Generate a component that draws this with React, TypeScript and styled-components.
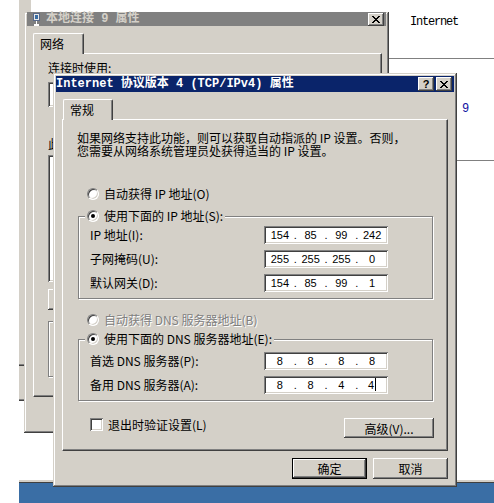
import React from 'react';
import styled, { createGlobalStyle, css } from 'styled-components';

const FACE = '#d4d0c8';
const SHADOW = '#808080';
const DARK = '#404040';
const NAVY = '#0a246a';

const UI_FONT = '"Noto Sans CJK SC", "Liberation Sans", sans-serif';
const MONO_FONT = '"Liberation Mono", "Noto Sans CJK SC", monospace';

const GlobalStyle = createGlobalStyle`
  html, body {
    margin: 0;
    padding: 0;
    background: #fff;
  }
  body {
    font-family: ${UI_FONT};
    font-size: 12px;
    color: #000;
  }
`;

const raised = css`
  box-shadow: inset -1px -1px ${DARK}, inset 1px 1px #fff, inset -2px -2px ${SHADOW},
    inset 2px 2px ${FACE};
`;

const sunken = css`
  box-shadow: inset 1px 1px ${SHADOW}, inset -1px -1px #fff, inset 2px 2px ${DARK},
    inset -2px -2px ${FACE};
`;

const Screen = styled.div`
  position: relative;
  width: 494px;
  height: 503px;
  overflow: hidden;
  background: #fff;
`;

/* desktop strip under the explorer window */
const DesktopBand = styled.div`
  position: absolute;
  left: 19px;
  right: 0;
  top: 480px;
  bottom: 0;
  border-top: 2px solid ${FACE};
  box-shadow: inset 0 1px ${DARK};
  background: #3a6ea5;
`;

const FarWindow = styled.div`
  position: absolute;
  left: 19px;
  top: 0;
  width: 12px;
  height: 401px;
  box-sizing: border-box;
  background: ${FACE};
  border-bottom: 1px solid ${DARK};
  box-shadow: inset 0 -1px ${SHADOW};
`;

const FarPane = styled.div`
  height: 366px;
  box-sizing: border-box;
  border-bottom: 1px solid ${DARK};
  box-shadow: inset 0 -1px ${SHADOW};
`;

const ListPane = styled.div`
  position: absolute;
  left: 389px;
  top: 0;
  width: 105px;
  display: flex;
  flex-direction: column;
`;

const ListCell = styled.div<{ $height: number; $padTop: number; $padLeft: number; $blue?: boolean }>`
  height: ${({ $height }) => $height}px;
  box-sizing: border-box;
  padding: ${({ $padTop, $padLeft }) => `${$padTop}px 0 0 ${$padLeft}px`};
  border-bottom: 1px solid ${SHADOW};
  font-family: ${MONO_FONT};
  font-size: 12px;
  line-height: 14px;
  letter-spacing: -1.2px;
  color: ${({ $blue }) => ($blue ? '#1010a0' : '#000')};
`;

const Window = styled.section<{
  $left: number;
  $top: number;
  $width: number;
  $height: number;
  $cutTop?: boolean;
}>`
  position: absolute;
  left: ${({ $left }) => $left}px;
  top: ${({ $top }) => $top}px;
  width: ${({ $width }) => $width}px;
  height: ${({ $height }) => $height}px;
  box-sizing: border-box;
  padding: ${({ $cutTop }) => ($cutTop ? '0 3px 3px' : '3px')};
  background: ${FACE};
  box-shadow: inset -1px -1px ${DARK}, inset 1px 1px ${FACE}, inset -2px -2px ${SHADOW},
    inset 2px 2px #fff;
  display: flex;
  flex-direction: column;
`;

const TitleBar = styled.header<{ $active?: boolean; $height: number; $padLeft: number }>`
  flex: none;
  height: ${({ $height }) => $height}px;
  display: flex;
  align-items: center;
  padding: 0 2px 0 ${({ $padLeft }) => $padLeft}px;
  background: ${({ $active }) => ($active ? NAVY : SHADOW)};
  color: ${({ $active }) => ($active ? '#fff' : FACE)};
  font-family: ${MONO_FONT};
  font-size: 12px;
  font-weight: bold;
`;

const TitleText = styled.span`
  flex: 1;
  min-width: 0;
  white-space: pre;
  overflow: hidden;
  line-height: 16px;
`;

const TitleIcon = styled.svg`
  flex: none;
  margin-right: 5px;
`;

const CaptionButton = styled.span<{ $height: number }>`
  flex: none;
  width: 16px;
  height: ${({ $height }) => $height}px;
  box-sizing: border-box;
  display: flex;
  align-items: center;
  justify-content: center;
  background: ${FACE};
  ${raised};
  color: #000;
  font-family: 'Liberation Sans', sans-serif;
  font-size: 11px;
  font-weight: bold;
  line-height: 1;

  & + & {
    margin-left: 2px;
  }
`;

const WindowBody = styled.div<{ $padRight: number }>`
  flex: 1;
  display: flex;
  flex-direction: column;
  padding: 7px ${({ $padRight }) => $padRight}px 0 6px;
`;

const TabStrip = styled.div<{ $offset: number }>`
  flex: none;
  height: 20px;
  display: flex;
  align-items: flex-start;
  padding-left: ${({ $offset }) => $offset}px;
`;

const Tab = styled.div<{ $width: number }>`
  position: relative;
  z-index: 1;
  width: ${({ $width }) => $width}px;
  height: 21px;
  box-sizing: border-box;
  padding-left: 6px;
  border-top: 1px solid #fff;
  border-left: 1px solid #fff;
  border-right: 1px solid ${DARK};
  border-radius: 2px 2px 0 0;
  box-shadow: inset -1px 0 ${SHADOW};
  background: ${FACE};
  line-height: 19px;
`;

const TabPanel = styled.div<{ $height: number }>`
  flex: none;
  height: ${({ $height }) => $height}px;
  box-sizing: border-box;
  border: 1px solid;
  border-color: #fff ${DARK} ${DARK} #fff;
  box-shadow: inset -1px -1px ${SHADOW};
  display: flex;
  flex-direction: column;
  overflow: hidden;
`;

const Intro = styled.p`
  margin: 11px 0 0 14px;
  line-height: 13px;
`;

const OptionRow = styled.div<{ $top: number; $left?: number }>`
  height: 16px;
  margin: ${({ $top, $left = 24 }) => `${$top}px 0 0 ${$left}px`};
  display: flex;
  align-items: center;
  gap: 5px;
  white-space: nowrap;
`;

const OptionText = styled.span<{ $disabled?: boolean }>`
  line-height: 16px;
  color: ${({ $disabled }) => ($disabled ? SHADOW : '#000')};
  text-shadow: ${({ $disabled }) => ($disabled ? '1px 1px 0 #fff' : 'none')};
`;

const Radio = styled.span<{ $checked?: boolean }>`
  position: relative;
  flex: none;
  width: 12px;
  height: 12px;
  box-sizing: border-box;
  border-radius: 50%;
  border: 1px solid;
  border-color: ${SHADOW} #fff #fff ${SHADOW};
  box-shadow: inset 1px 1px ${DARK}, inset -1px -1px ${FACE};
  background: #fff;

  &::after {
    content: '';
    display: ${({ $checked }) => ($checked ? 'block' : 'none')};
    position: absolute;
    left: 3px;
    top: 3px;
    width: 4px;
    height: 4px;
    border-radius: 50%;
    background: #000;
  }
`;

const CheckBox = styled.span`
  flex: none;
  width: 13px;
  height: 13px;
  box-sizing: border-box;
  background: #fff;
  ${sunken};
`;

const GroupBox = styled.fieldset<{ $top: number }>`
  margin: ${({ $top }) => $top}px 14px 0 15px;
  padding: 0;
  min-inline-size: 0;
  border: 1px solid ${SHADOW};
  box-shadow: inset 1px 1px #fff, 1px 1px 0 #fff;
`;

const GroupLegend = styled.legend`
  margin-left: 6px;
  padding: 0 2px;
  height: 16px;
  display: flex;
  align-items: center;
  gap: 5px;
  background: ${FACE};
  white-space: nowrap;
`;

const FieldGrid = styled.div<{ $top: number; $bottom: number }>`
  display: grid;
  grid-template-columns: 174px 124px;
  row-gap: 6px;
  align-items: center;
  padding: ${({ $top, $bottom }) => `${$top}px 0 ${$bottom}px 11px`};
`;

const FieldLabel = styled.span`
  line-height: 18px;
  white-space: nowrap;
`;

const IpBox = styled.div`
  height: 18px;
  box-sizing: border-box;
  padding: 0 2px;
  display: grid;
  grid-template-columns: 1fr 3px 1fr 3px 1fr 3px 1fr;
  align-items: center;
  background: #fff;
  ${sunken};
  font-family: 'Liberation Sans', sans-serif;
  font-size: 11px;
  line-height: 16px;
`;

const Octet = styled.span`
  text-align: center;
`;

const Dot = styled.span`
  text-align: center;
`;

const Caret = styled.span`
  display: inline-block;
  width: 1px;
  height: 13px;
  margin-left: 1px;
  vertical-align: -2px;
  background: #000;
`;

const FooterRow = styled.div`
  margin-top: 17px;
  padding: 0 13px 0 27px;
  display: flex;
  align-items: flex-start;
  justify-content: space-between;
`;

const CheckLabel = styled.label`
  display: flex;
  align-items: center;
  gap: 5px;
  height: 13px;
  line-height: 13px;
`;

const PushButton = styled.button<{ $width: number; $height: number; $default?: boolean }>`
  width: ${({ $width }) => $width}px;
  height: ${({ $height }) => $height}px;
  box-sizing: border-box;
  margin: 0;
  padding: 0;
  border: ${({ $default }) => ($default ? '1px solid #000' : 'none')};
  background: ${FACE};
  ${raised};
  font-family: ${UI_FONT};
  font-size: 12px;
  color: #000;
  white-space: nowrap;
`;

const DialogButtons = styled.div`
  margin-top: 7px;
  display: flex;
  justify-content: flex-end;
  gap: 6px;
`;

/* partially hidden "本地连接 9 属性" dialog; only its left margin shows */
const BackCaption = styled.div<{ $top: number; $visible?: number }>`
  margin: ${({ $top }) => $top}px 0 0 14px;
  line-height: 13px;
  white-space: nowrap;
  overflow: hidden;
  width: ${({ $visible }) => ($visible ? `${$visible}px` : 'auto')};
`;

const BackField = styled.div<{ $top: number; $height: number }>`
  margin: ${({ $top }) => $top}px 12px 0 14px;
  height: ${({ $height }) => $height}px;
  flex: none;
  box-sizing: border-box;
  background: #fff;
  ${sunken};
`;

const BackButton = styled.div`
  margin: 7px 0 0 14px;
  width: 90px;
  height: 21px;
  flex: none;
  box-sizing: border-box;
  background: ${FACE};
  ${raised};
`;

const BackGroup = styled.div`
  margin: 11px 12px 0 14px;
  height: 56px;
  box-sizing: border-box;
  border: 1px solid ${SHADOW};
  box-shadow: inset 1px 1px #fff, 1px 1px 0 #fff;
`;

const CloseGlyph = () => (
  <svg width="8" height="7" viewBox="0 0 8 7" shapeRendering="crispEdges">
    <path
      d="M0 0h2v1h1v1h2V1h1V0h2v1H7v1H6v1H5v1h1v1h1v1h1v1H6V6H5V5H3v1H2v1H0V6h1V5h1V4h1V3H2V2H1V1H0z"
      fill="#000"
    />
  </svg>
);

const ipRows = [
  { label: 'IP 地址(I):', octets: ['154', '85', '99', '242'] },
  { label: '子网掩码(U):', octets: ['255', '255', '255', '0'] },
  { label: '默认网关(D):', octets: ['154', '85', '99', '1'] },
];

const dnsRows = [
  { label: '首选 DNS 服务器(P):', octets: ['8', '8', '8', '8'] },
  { label: '备用 DNS 服务器(A):', octets: ['8', '8', '4', '4'], caret: true },
];

interface IpFieldProps {
  octets: string[];
  caret?: boolean;
}

function IpField({ octets, caret }: IpFieldProps) {
  return (
    <IpBox>
      {octets.map((octet, index) => (
        <React.Fragment key={index}>
          {index > 0 && <Dot>.</Dot>}
          <Octet>
            {octet}
            {caret && index === octets.length - 1 && <Caret />}
          </Octet>
        </React.Fragment>
      ))}
    </IpBox>
  );
}

export default function App() {
  return (
    <Screen>
      <GlobalStyle />
      <DesktopBand />
      <FarWindow>
        <FarPane />
      </FarWindow>

      <ListPane>
        <ListCell $height={59} $padTop={15} $padLeft={21}>
          Internet
        </ListCell>
        <ListCell $height={102} $padTop={43} $padLeft={73} $blue>
          9
        </ListCell>
      </ListPane>

      <Window $left={24} $top={12} $width={365} $height={421} $cutTop>
        <TitleBar $height={14} $padLeft={6}>
          <TitleIcon width="8" height="13" viewBox="0 0 8 13">
            <rect x="0.5" y="0.5" width="6" height="7" fill="#e8e8e8" stroke="#5a6a8a" />
            <rect x="2" y="2" width="3" height="4" fill="#3a6ea5" />
            <rect x="3" y="8" width="1" height="3" fill="#fff" />
            <rect x="1" y="11" width="5" height="2" fill="#fff" />
          </TitleIcon>
          <TitleText>本地连接 9 属性</TitleText>
          <CaptionButton $height={13}>
            <CloseGlyph />
          </CaptionButton>
        </TitleBar>
        <WindowBody $padRight={4}>
          <TabStrip $offset={0}>
            <Tab $width={51}>网络</Tab>
          </TabStrip>
          <TabPanel $height={344}>
            <BackCaption $top={7}>连接时使用:</BackCaption>
            <BackField $top={8} $height={25} />
            <BackCaption $top={30} $visible={6}>
              此
            </BackCaption>
            <BackField $top={5} $height={127} />
            <BackButton />
            <BackGroup />
          </TabPanel>
        </WindowBody>
      </Window>

      <Window $left={53} $top={73} $width={404} $height={414}>
        <TitleBar $active $height={16} $padLeft={0}>
          <TitleText>Internet 协议版本 4 (TCP/IPv4) 属性</TitleText>
          <CaptionButton $height={14}>?</CaptionButton>
          <CaptionButton $height={14}>
            <CloseGlyph />
          </CaptionButton>
        </TitleBar>
        <WindowBody $padRight={6}>
          <TabStrip $offset={1}>
            <Tab $width={50}>常规</Tab>
          </TabStrip>
          <TabPanel $height={332}>
            <Intro>
              如果网络支持此功能，则可以获取自动指派的 IP 设置。否则，
              <br />
              您需要从网络系统管理员处获得适当的 IP 设置。
            </Intro>

            <OptionRow $top={29}>
              <Radio />
              <OptionText>自动获得 IP 地址(O)</OptionText>
            </OptionRow>

            <GroupBox $top={6}>
              <GroupLegend>
                <Radio $checked />
                <OptionText>使用下面的 IP 地址(S):</OptionText>
              </GroupLegend>
              <FieldGrid $top={2} $bottom={6}>
                {ipRows.map(({ label, octets }) => (
                  <React.Fragment key={label}>
                    <FieldLabel>{label}</FieldLabel>
                    <IpField octets={octets} />
                  </React.Fragment>
                ))}
              </FieldGrid>
            </GroupBox>

            <OptionRow $top={13}>
              <Radio />
              <OptionText $disabled>自动获得 DNS 服务器地址(B)</OptionText>
            </OptionRow>

            <GroupBox $top={3}>
              <GroupLegend>
                <Radio $checked />
                <OptionText>使用下面的 DNS 服务器地址(E):</OptionText>
              </GroupLegend>
              <FieldGrid $top={5} $bottom={6}>
                {dnsRows.map(({ label, octets, caret }) => (
                  <React.Fragment key={label}>
                    <FieldLabel>{label}</FieldLabel>
                    <IpField octets={octets} caret={caret} />
                  </React.Fragment>
                ))}
              </FieldGrid>
            </GroupBox>

            <FooterRow>
              <CheckLabel>
                <CheckBox />
                退出时验证设置(L)
              </CheckLabel>
              <PushButton $width={90} $height={20}>
                高级(V)...
              </PushButton>
            </FooterRow>
          </TabPanel>
          <DialogButtons>
            <PushButton $width={75} $height={21} $default>
              确定
            </PushButton>
            <PushButton $width={75} $height={21}>
              取消
            </PushButton>
          </DialogButtons>
        </WindowBody>
      </Window>
    </Screen>
  );
}
